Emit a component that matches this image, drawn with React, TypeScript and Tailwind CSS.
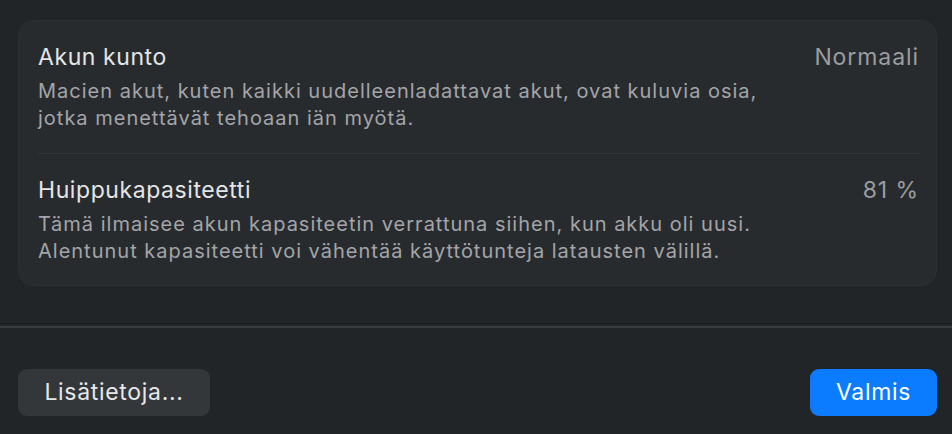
import React from 'react';

type Row = {
  title: string;
  value: string;
  lines: string[];
};

const rows: Row[] = [
  {
    title: 'Akun kunto',
    value: 'Normaali',
    lines: [
      'Macien akut, kuten kaikki uudelleenladattavat akut, ovat kuluvia osia,',
      'jotka menettävät tehoaan iän myötä.',
    ],
  },
  {
    title: 'Huippukapasiteetti',
    value: '81 %',
    lines: [
      'Tämä ilmaisee akun kapasiteetin verrattuna siihen, kun akku oli uusi.',
      'Alentunut kapasiteetti voi vähentää käyttötunteja latausten välillä.',
    ],
  },
];

export default function App() {
  return (
    <div
      className="w-[952px] h-[434px] bg-[#222528] flex flex-col overflow-hidden"
      style={{ fontFamily: 'Inter, "Noto Sans", sans-serif' }}
    >
      {/* Info card */}
      <div className="pl-[18px] pr-[15px] pt-[20px]">
        <div className="bg-[#282b2e] rounded-[16px] border border-[#2d3033] pl-[19px] pr-[17px]">
          {rows.map((row, i) => (
            <div
              key={row.title}
              className={i > 0 ? 'pt-[22px] pb-[20px] border-t border-[#34373a]' : 'pt-[22px] pb-[21px]'}
            >
              <div className="flex justify-between items-baseline">
                <span className="text-[23px] leading-[28px] tracking-[0.025em] text-[#e4e5e6]">{row.title}</span>
                <span className="text-[23px] leading-[28px] tracking-[0.04em] text-[#9b9da0]">{row.value}</span>
              </div>
              <div className="mt-[7px] text-[20px] leading-[27px] tracking-[0.05em] text-[#a3a5a8]">
                {row.lines.map((l) => (
                  <div key={l}>{l}</div>
                ))}
              </div>
            </div>
          ))}
        </div>
      </div>

      {/* Separator */}
      <div className="mt-[37px] h-[1px] bg-[#1b1d1f]" />
      <div className="mt-[2px] h-[2px] bg-[#393c3f]" />

      {/* Buttons */}
      <div className="flex justify-between pl-[18px] pr-[15px] pt-[41px]">
        <button className="h-[47px] w-[192px] rounded-[9px] bg-[#34373a] text-[23px] tracking-[0.03em] text-[#e6e7e8]">
          Lisätietoja...
        </button>
        <button className="h-[47px] w-[127px] rounded-[9px] bg-[#0b7bff] text-[23px] tracking-[0.03em] text-white">
          Valmis
        </button>
      </div>
    </div>
  );
}
